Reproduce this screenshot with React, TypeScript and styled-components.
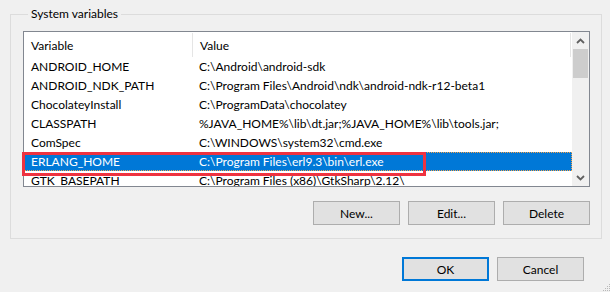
import React from "react";
import styled, { createGlobalStyle } from "styled-components";

const FONT = `Lato, "Liberation Sans", Arial, sans-serif`;

const Global = createGlobalStyle`
  html, body { margin: 0; padding: 0; background: #f0f0f0; }
  body { font-family: ${FONT}; font-size: 12px; color: #000; }
  * { box-sizing: border-box; }
`;

const Page = styled.div`
  position: relative;
  width: 610px;
  height: 292px;
  overflow: hidden;
  padding: 7px 0 0 10px;
  display: flex;
  flex-direction: column;
`;

const Group = styled.fieldset`
  margin: 0;
  width: 592px;
  height: 232px;
  border: 1px solid #dcdcdc;
  padding: 10px 11px 0 12px;
  display: flex;
  flex-direction: column;
  min-width: 0;
`;

const Legend = styled.legend`
  margin-left: 5px;
  padding: 0 3px;
  line-height: 14px;
  font-size: 12px;
`;

const ListBox = styled.div`
  position: relative;
  width: 567px;
  height: 156px;
  border: 1px solid #828790;
  background: #fff;
  display: flex;
`;

const ListContent = styled.div`
  flex: 1;
  overflow: hidden;
  display: flex;
  flex-direction: column;
`;

const HeaderRow = styled.div`
  display: flex;
  height: 25px;
  flex: none;
`;

const HeaderCell = styled.div<{ $w?: number }>`
  width: ${(p) => (p.$w ? `${p.$w}px` : "auto")};
  flex: ${(p) => (p.$w ? "none" : "1")};
  padding-left: 7px;
  display: flex;
  align-items: center;
  border-right: 1px solid #e5e5e5;
  height: 24px;
  margin-top: 1px;
`;

const Row = styled.div<{ $sel?: boolean }>`
  display: flex;
  height: 19px;
  flex: none;
  align-items: center;
  background: ${(p) => (p.$sel ? "#0078d7" : "transparent")};
  color: ${(p) => (p.$sel ? "#fff" : "#000")};
  outline: ${(p) => (p.$sel ? "1px dotted #f5a34a" : "none")};
  outline-offset: -1px;
`;

const Cell = styled.div<{ $w?: number }>`
  width: ${(p) => (p.$w ? `${p.$w}px` : "auto")};
  flex: ${(p) => (p.$w ? "none" : "1")};
  padding-left: 7px;
  white-space: nowrap;
  overflow: hidden;
`;

const ScrollBar = styled.div`
  width: 17px;
  flex: none;
  background: #f0f0f0;
  display: flex;
  flex-direction: column;
`;

const Arrow = styled.div`
  height: 17px;
  flex: none;
  display: flex;
  align-items: center;
  justify-content: center;
`;

const Track = styled.div`
  flex: 1;
  display: flex;
  flex-direction: column;
`;

const Thumb = styled.div`
  height: 29px;
  margin: 0 1px;
  background: #cdcdcd;
`;

const Highlight = styled.div`
  position: absolute;
  left: -2px;
  top: 120px;
  width: 404px;
  height: 24px;
  border: 3px solid #ee3340;
  pointer-events: none;
`;

const ButtonRow = styled.div<{ $mt: number; $pr?: number }>`
  display: flex;
  justify-content: flex-end;
  gap: 8px;
  margin-top: ${(p) => p.$mt}px;
  padding-right: ${(p) => p.$pr ?? 0}px;
`;

const Button = styled.button<{ $primary?: boolean }>`
  width: 87px;
  height: 24px;
  background: #e1e1e1;
  border: ${(p) => (p.$primary ? "2px solid #0078d7" : "1px solid #adadad")};
  font-family: ${FONT};
  font-size: 12px;
  color: #000;
  padding: 0;
  margin: 0;
`;

const Grip = styled.svg`
  position: absolute;
  right: 0;
  bottom: 0;
`;

const rows: [string, string][] = [
  ["ANDROID_HOME", "C:\\Android\\android-sdk"],
  ["ANDROID_NDK_PATH", "C:\\Program Files\\Android\\ndk\\android-ndk-r12-beta1"],
  ["ChocolateyInstall", "C:\\ProgramData\\chocolatey"],
  ["CLASSPATH", "%JAVA_HOME%\\lib\\dt.jar;%JAVA_HOME%\\lib\\tools.jar;"],
  ["ComSpec", "C:\\WINDOWS\\system32\\cmd.exe"],
  ["ERLANG_HOME", "C:\\Program Files\\erl9.3\\bin\\erl.exe"],
  ["GTK_BASEPATH", "C:\\Program Files (x86)\\GtkSharp\\2.12\\"],
];

const Chevron = ({ up }: { up?: boolean }) => (
  <svg width="9" height="6" viewBox="0 0 9 6">
    <path
      d={up ? "M1 5 L4.5 1.5 L8 5" : "M1 1 L4.5 4.5 L8 1"}
      fill="none"
      stroke="#606060"
      strokeWidth="1.8"
    />
  </svg>
);

export default function App() {
  return (
    <>
      <Global />
      <Page>
        <Group>
          <Legend>System variables</Legend>
          <ListBox>
            <ListContent>
              <HeaderRow>
                <HeaderCell $w={169}>Variable</HeaderCell>
                <HeaderCell $w={378}>Value</HeaderCell>
              </HeaderRow>
              {rows.map(([k, v], i) => (
                <Row key={k} $sel={i === 5}>
                  <Cell $w={168}>{k}</Cell>
                  <Cell>{v}</Cell>
                </Row>
              ))}
            </ListContent>
            <ScrollBar>
              <Arrow>
                <Chevron up />
              </Arrow>
              <Track>
                <Thumb />
              </Track>
              <Arrow>
                <Chevron />
              </Arrow>
            </ScrollBar>
            <Highlight />
          </ListBox>
          <ButtonRow $mt={14}>
            <Button>New...</Button>
            <Button>Edit...</Button>
            <Button>Delete</Button>
          </ButtonRow>
        </Group>
        <ButtonRow $mt={18} $pr={26}>
          <Button $primary>OK</Button>
          <Button>Cancel</Button>
        </ButtonRow>
        <Grip width="8" height="8" viewBox="0 0 8 8">
          {[
            [6, 0], [6, 2], [4, 2], [6, 4], [4, 4], [2, 4], [6, 6], [4, 6], [2, 6], [0, 6],
          ].map(([x, y], i) => (
            <rect key={i} x={x + 1} y={y} width="1" height="1" fill="#b8b8b8" />
          ))}
        </Grip>
      </Page>
    </>
  );
}
